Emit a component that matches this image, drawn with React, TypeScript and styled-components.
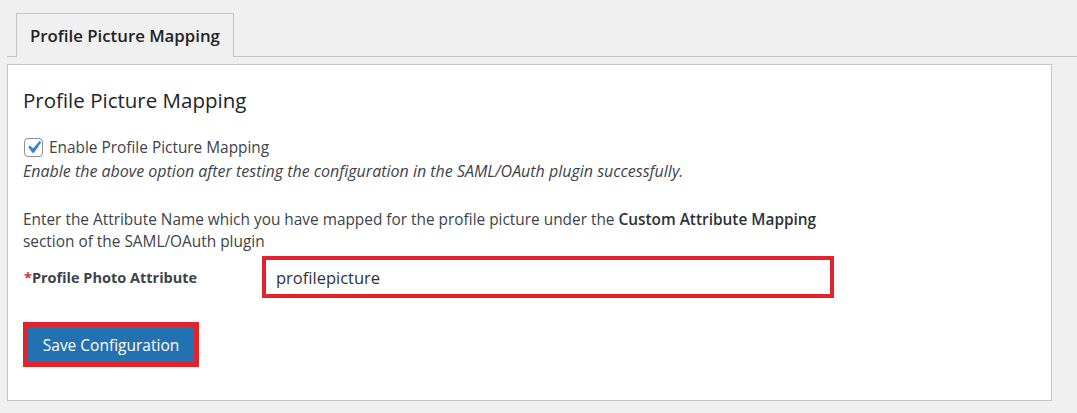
import styled, { createGlobalStyle } from "styled-components";

const GlobalStyle = createGlobalStyle`
  html, body {
    margin: 0;
    padding: 0;
    background: #f0f0f1;
  }
  body {
    font-family: "Open Sans", "Noto Sans", Arial, sans-serif;
    color: #3c434a;
  }
`;

const Page = styled.div`
  width: 1077px;
  height: 413px;
  padding: 13px 0 0 7px;
  box-sizing: border-box;
  overflow: hidden;
`;

const TabBar = styled.div`
  display: flex;
  padding-left: 9px;
  border-bottom: 1px solid #c3c4c7;
`;

const Tab = styled.div`
  height: 43px;
  padding: 0 13px;
  display: flex;
  align-items: center;
  border: 1px solid #c3c4c7;
  border-bottom: none;
  background: #f0f0f1;
  margin-bottom: -1px;
  font-size: 16.8px;
  font-weight: 600;
  color: #1d2327;
`;

const Panel = styled.div`
  margin: 7px 25px 0 0;
  background: #fff;
  border: 1px solid #c3c4c7;
  padding: 22px 16px 35px 15px;
  height: 337px;
  box-sizing: border-box;
`;

const Heading = styled.h2`
  margin: 0 0 25px;
  font-size: 20.5px;
  line-height: 26px;
  font-weight: 500;
  color: #1d2327;
`;

const CheckRow = styled.label`
  display: flex;
  align-items: center;
  gap: 6px;
  height: 19px;
  font-size: 15.4px;
  color: #3c434a;
`;

const CheckBox = styled.span`
  flex-shrink: 0;
  width: 19px;
  height: 19px;
  box-sizing: border-box;
  border: 1px solid #8c8f94;
  border-radius: 4px;
  background: #fff;
  display: flex;
  align-items: center;
  justify-content: center;
  margin-left: 1px;
  overflow: visible;

  svg {
    flex-shrink: 0;
  }
`;

const Hint = styled.p`
  margin: 4px 0 0;
  font-size: 16px;
  line-height: 20px;
  font-style: italic;
  color: #3c434a;
`;

const Info = styled.p`
  margin: 28px 0 0;
  max-width: 810px;
  font-size: 15.4px;
  line-height: 22px;
  color: #3c434a;

  strong {
    font-weight: 600;
    color: #2c3338;
  }
`;

const FieldRow = styled.div`
  display: flex;
  align-items: center;
  margin-top: 3px;
  height: 42px;
`;

const Label = styled.div`
  width: 239px;
  flex-shrink: 0;
  font-size: 14.5px;
  font-weight: 700;
  color: #3c434a;
  padding-left: 1px;
  box-sizing: border-box;
`;

const Required = styled.span`
  color: #d63638;
`;

const Highlight = styled.div<{ $width?: number }>`
  border: ${(p) => p.$width ?? 4}px solid #e3222c;
  box-sizing: border-box;
  display: flex;
`;

const TextInput = styled.input`
  width: 564px;
  height: 34px;
  border: none;
  outline: none;
  padding: 0 10px;
  box-sizing: border-box;
  font-family: "Open Sans", "Noto Sans", Arial, sans-serif;
  font-size: 16.5px;
  color: #2c3338;
  background: #fff;
`;

const ButtonWrap = styled.div`
  margin-top: 24px;
  display: flex;
`;

const Button = styled.button`
  height: 35px;
  padding: 0;
  width: 166px;
  border: 1px solid #2271b1;
  background: #2271b1;
  color: #fff;
  font-family: "Open Sans", "Noto Sans", Arial, sans-serif;
  font-size: 15.5px;
  cursor: pointer;
  white-space: nowrap;
`;

const App = () => {
  return (
    <>
      <GlobalStyle />
      <Page>
        <TabBar>
          <Tab>Profile Picture Mapping</Tab>
        </TabBar>
        <Panel>
          <Heading>Profile Picture Mapping</Heading>
          <CheckRow>
            <CheckBox>
              <svg width="25" height="25" viewBox="0 0 20 20">
                <path d="M14.83 4.89l1.34.94-5.81 8.38H9.02L5.78 9.67l1.34-1.25 2.57 2.4z" fill="#3582c4" />
              </svg>
            </CheckBox>
            Enable Profile Picture Mapping
          </CheckRow>
          <Hint>Enable the above option after testing the configuration in the SAML/OAuth plugin successfully.</Hint>
          <Info>
            Enter the Attribute Name which you have mapped for the profile picture under the{" "}
            <strong>Custom Attribute Mapping</strong> section of the SAML/OAuth plugin
          </Info>
          <FieldRow>
            <Label>
              <Required>*</Required>Profile Photo Attribute
            </Label>
            <Highlight>
              <TextInput defaultValue="profilepicture" />
            </Highlight>
          </FieldRow>
          <ButtonWrap>
            <Highlight $width={5}>
              <Button>Save Configuration</Button>
            </Highlight>
          </ButtonWrap>
        </Panel>
      </Page>
    </>
  );
};

export default App;
